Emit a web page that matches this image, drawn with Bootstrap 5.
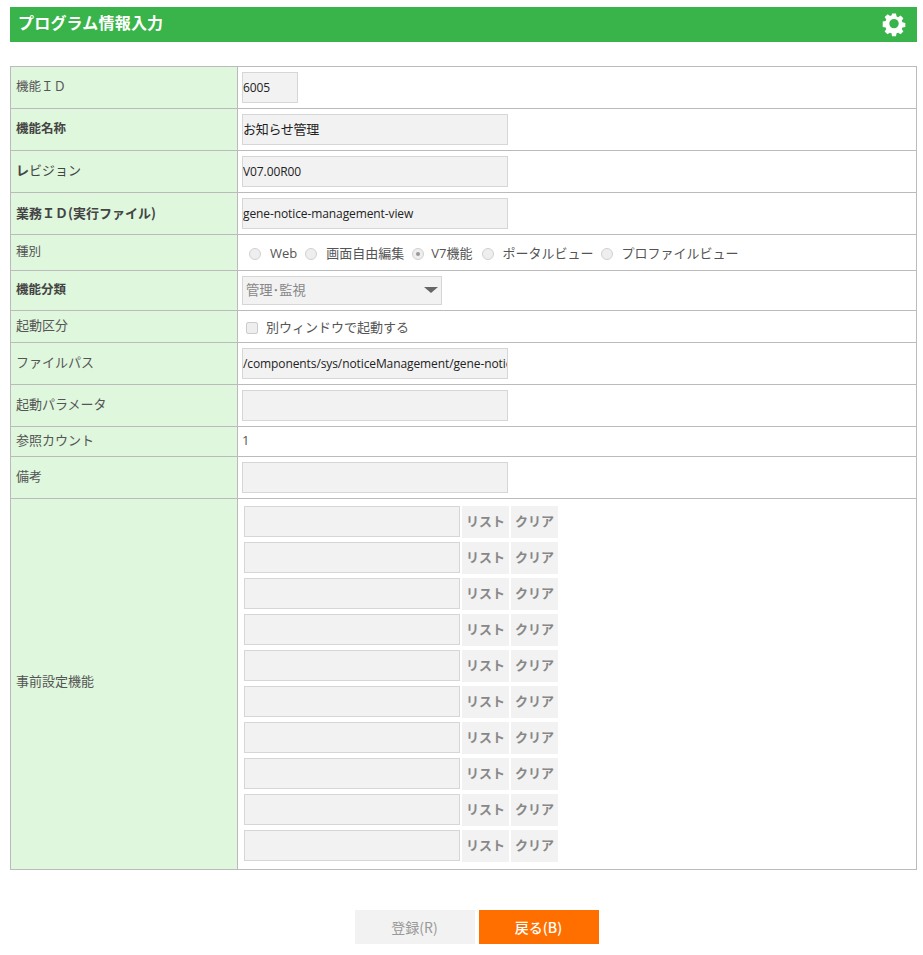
<!DOCTYPE html>
<html lang="ja">
<head>
<meta charset="utf-8">
<title>プログラム情報入力</title>
<link href="https://cdn.jsdelivr.net/npm/bootstrap@5.3.0/dist/css/bootstrap.min.css" rel="stylesheet">
<style>
html,body{background:#fff;}
body{font-family:"Open Sans","Noto Sans CJK JP",sans-serif;font-size:13px;color:#555;}
.page-wrap{padding:7px 6px 0 10px;width:923px;}
.title-bar{height:35px;background:#38b44a;color:#fff;padding:0 11px 0 8px;margin-bottom:24px;}
.title-bar h1{font-size:16px;font-weight:700;letter-spacing:.2px;margin:0;line-height:16px;padding-bottom:5px;color:#fff;font-family:"Noto Sans CJK JP",sans-serif;}
.form-grid{width:907px;table-layout:fixed;border-collapse:collapse;}
.form-grid th,.form-grid td{border:1px solid #bbb;padding:0 4px;vertical-align:middle;}
.form-grid th{width:227px;background:#dff7dd;font-weight:400;font-size:12.5px;padding:0 0 2px 5px;color:#555;font-family:"Noto Sans CJK JP",sans-serif;}
.form-grid th.lbl-b{font-weight:700;color:#444;}
.form-grid th.lbl-m{font-size:13px;padding-bottom:4px;}
.form-grid th.lbl-w{font-size:13px;}
.form-grid th.lbl-z{font-size:13px;padding-bottom:6px;}
.lbl-soft{font-weight:400;}
.h42{height:42px;}.h36{height:36px;}.h40{height:40px;}.h32{height:32px;}.h30{height:30px;}
.field{display:block;height:31px;background:#f2f2f2;border:1px solid #d6d6d6;padding:0;font-size:12px;letter-spacing:-.1px;color:#222;width:266px;font-family:"Open Sans","Noto Sans CJK JP",sans-serif;border-radius:0;outline:0;}
.field-s{width:56px;}
.field-j{font-size:13px;letter-spacing:-.3px;padding-bottom:2px;font-family:"Noto Sans CJK JP",sans-serif;}
.field-n{width:216px;}
.pick{width:200px;height:29px;background:#f2f2f2;border:1px solid #d6d6d6;color:#888;font-size:13.3px;padding:0 3px 2px 3px;font-family:"Noto Sans CJK JP",sans-serif;}
.caret-d{width:0;height:0;border-left:7px solid transparent;border-right:7px solid transparent;border-top:6px solid #666;margin-top:1px;}
.opts{padding:3px 0 0 7px;color:#555;font-size:13px;font-family:"Open Sans","Noto Sans CJK JP",sans-serif;white-space:nowrap;}
.opts-chk{padding-left:4px;}
.rd{width:12px;height:12px;border-radius:50%;border:1px solid #d0d0d0;background:#eee;display:inline-block;flex:none;position:relative;margin-right:1px;}
.rd-on{margin-right:-1px;}
.rd-t{margin-right:0;}
.lbl-v7{margin-right:2px;}
.rd-on::after{content:"";position:absolute;left:3px;top:3px;width:4px;height:4px;border-radius:50%;background:#999;}
.ck{width:12px;height:12px;border:1px solid #ccc;background:#eee;border-radius:2px;display:inline-block;flex:none;}
.mini{width:47px;height:32px;background:#f2f2f2;color:#888;font-weight:700;font-size:13px;border:0;padding:0 0 2px;margin-left:2px;border-radius:0;font-family:"Noto Sans CJK JP",sans-serif;}
.pre-list{padding:7px 0 7px 2px;display:flex;flex-direction:column;gap:4px;}
.pre-row{height:32px;}
.foot-btn{width:120px;height:34px;border:0;border-radius:0;font-size:14px;font-weight:400;padding:0;font-family:"Noto Sans CJK JP",sans-serif;}
.btn-off{background:#f2f2f2;color:#999;}
.btn-back{background:#ff6f00;color:#fff;font-weight:500;}
.foot-row{margin-top:40px;gap:4px;padding-left:26px;}
.num-val{padding-bottom:2px!important;line-height:1;}
</style>
</head>
<body>
<div class="page-wrap">
  <div class="title-bar d-flex align-items-center justify-content-between">
    <h1>プログラム情報入力</h1>
    <svg width="24" height="24" viewBox="0 0 24 24" aria-label="設定" role="img"><path fill="#fff" fill-rule="evenodd" d="M9.8 1h4.400l.6 3.200 1.700.7 2.700-1.800 3.100 3.100-1.800 2.700.7 1.700 3.200.6v4.400l-3.200.6-.7 1.700 1.800 2.700-3.100 3.100-2.700-1.800-1.700.7-.6 3.200H9.800l-.6-3.200-1.700-.7-2.700 1.800-3.100-3.100 1.800-2.700-.7-1.700-3.200-.6V9.800l3.200-.6.7-1.700-1.800-2.700L5 1.700l2.700 1.800 1.700-.7zM12 6.800a5.200 5.200 0 1 0 0 10.400 5.200 5.200 0 0 0 0-10.400z" transform="translate(1.100 -.3) scale(.91)"/></svg>
  </div>
  <table class="form-grid">
    <tr class="h42"><th>機能ＩＤ</th><td><input class="field field-s" value="6005"></td></tr>
    <tr class="h42"><th class="lbl-b">機能名称</th><td><input class="field field-j" value="お知らせ管理"></td></tr>
    <tr class="h42"><th class="lbl-b lbl-m">レ<span class="lbl-soft">ビジョン</span></th><td><input class="field" value="V07.00R00"></td></tr>
    <tr class="h42"><th class="lbl-b lbl-w">業務ＩＤ(実行ファイル)</th><td><input class="field" value="gene-notice-management-view"></td></tr>
    <tr class="h36"><th>種別</th><td><div class="opts d-flex align-items-center gap-2"><span class="rd"></span><span>Web</span><span class="rd"></span><span>画面自由編集</span><span class="rd rd-on"></span><span class="lbl-v7">V7機能</span><span class="rd rd-t"></span><span>ポータルビュー</span><span class="rd rd-t"></span><span>プロファイルビュー</span></div></td></tr>
    <tr class="h40"><th class="lbl-b">機能分類</th><td><div class="pick d-flex align-items-center justify-content-between"><span>管理･監視</span><span class="caret-d"></span></div></td></tr>
    <tr class="h32"><th class="lbl-m">起動区分</th><td><div class="opts opts-chk d-flex align-items-center gap-2"><span class="ck"></span><span>別ウィンドウで起動する</span></div></td></tr>
    <tr class="h42"><th class="lbl-m">ファイルパス</th><td><input class="field" value="/components/sys/noticeManagement/gene-notice-management-view.html"></td></tr>
    <tr class="h42"><th class="lbl-m">起動パラメータ</th><td><input class="field"></td></tr>
    <tr class="h30"><th class="lbl-m">参照カウント</th><td class="num-val">1</td></tr>
    <tr class="h42"><th class="lbl-m">備考</th><td><input class="field"></td></tr>
    <tr>
      <th class="lbl-z">事前設定機能</th>
      <td>
        <div class="pre-list">
          <div class="pre-row d-flex"><input class="field field-n"><button class="mini">リスト</button><button class="mini">クリア</button></div>
          <div class="pre-row d-flex"><input class="field field-n"><button class="mini">リスト</button><button class="mini">クリア</button></div>
          <div class="pre-row d-flex"><input class="field field-n"><button class="mini">リスト</button><button class="mini">クリア</button></div>
          <div class="pre-row d-flex"><input class="field field-n"><button class="mini">リスト</button><button class="mini">クリア</button></div>
          <div class="pre-row d-flex"><input class="field field-n"><button class="mini">リスト</button><button class="mini">クリア</button></div>
          <div class="pre-row d-flex"><input class="field field-n"><button class="mini">リスト</button><button class="mini">クリア</button></div>
          <div class="pre-row d-flex"><input class="field field-n"><button class="mini">リスト</button><button class="mini">クリア</button></div>
          <div class="pre-row d-flex"><input class="field field-n"><button class="mini">リスト</button><button class="mini">クリア</button></div>
          <div class="pre-row d-flex"><input class="field field-n"><button class="mini">リスト</button><button class="mini">クリア</button></div>
          <div class="pre-row d-flex"><input class="field field-n"><button class="mini">リスト</button><button class="mini">クリア</button></div>
        </div>
      </td>
    </tr>
  </table>
  <div class="foot-row d-flex justify-content-center">
    <button class="foot-btn btn-off">登録(R)</button>
    <button class="foot-btn btn-back">戻る(B)</button>
  </div>
</div>
<script src="https://cdn.jsdelivr.net/npm/bootstrap@5.3.0/dist/js/bootstrap.bundle.min.js"></script>
</body>
</html>
